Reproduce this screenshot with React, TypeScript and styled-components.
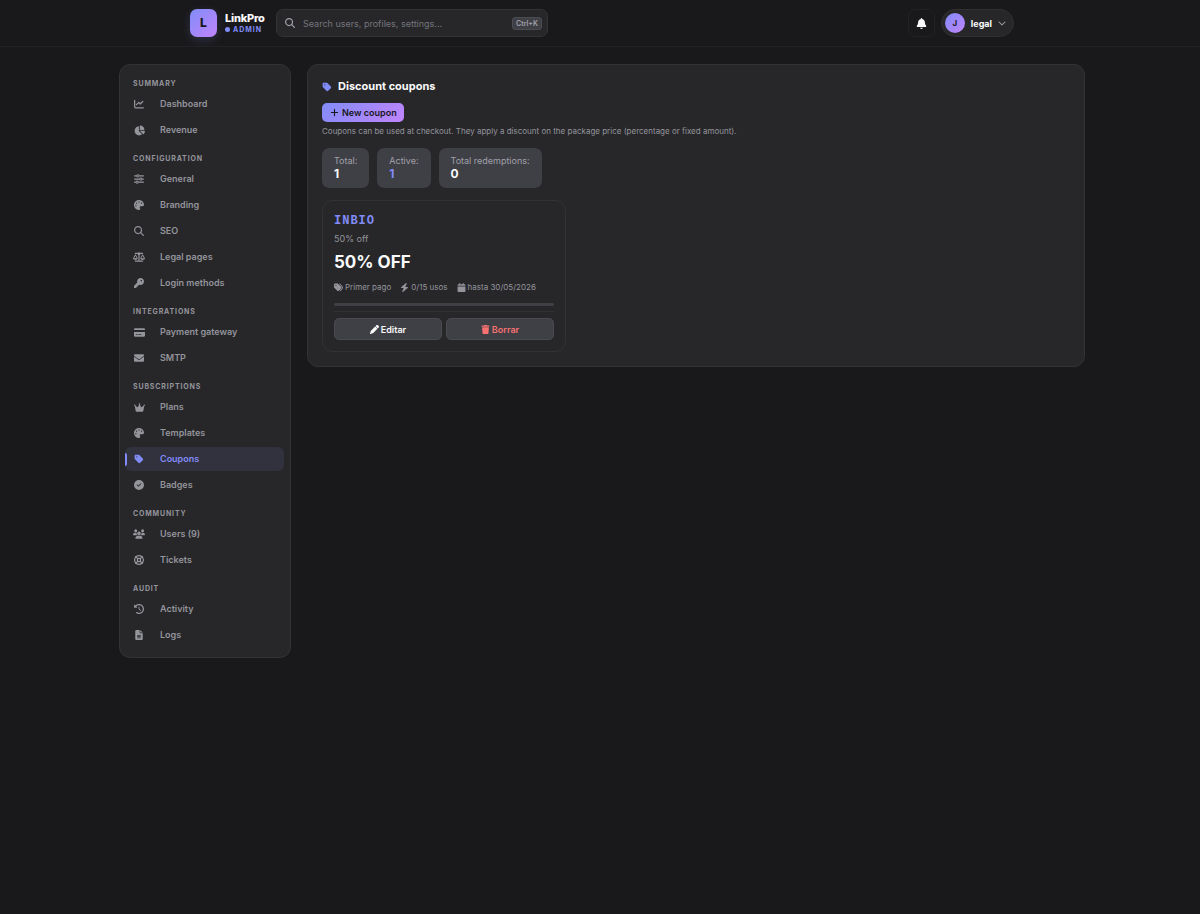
import React from "react";
import styled, { createGlobalStyle, css } from "styled-components";
import type { IconType } from "react-icons";
import {
  FaBell,
  FaBolt,
  FaCalendar,
  FaChartLine,
  FaChartPie,
  FaCircleCheck,
  FaClockRotateLeft,
  FaCreditCard,
  FaCrown,
  FaEnvelope,
  FaFileLines,
  FaKey,
  FaLifeRing,
  FaMagnifyingGlass,
  FaPalette,
  FaPen,
  FaPlus,
  FaScaleBalanced,
  FaSliders,
  FaTag,
  FaTags,
  FaTrash,
  FaUsers,
  FaChevronDown,
} from "react-icons/fa6";

const GlobalStyle = createGlobalStyle`
  *, *::before, *::after { box-sizing: border-box; }
  body {
    margin: 0;
    background: #19191b;
    color: #fafafa;
    font-family: Inter, "Liberation Sans", sans-serif;
    font-size: 9px;
    line-height: 12px;
  }
  button, input { font-family: inherit; margin: 0; }
  button { cursor: pointer; }
  svg { flex: none; }
`;

const gradient = "linear-gradient(135deg, #818cf8, #c084fc)";

const Header = styled.header`
  border-bottom: 1px solid #232326;
  padding: 9px 0 9px 4px;
`;

const HeaderInner = styled.div`
  display: flex;
  align-items: center;
  max-width: 824px;
  height: 28px;
  margin: 0 auto;
`;

const Brand = styled.a`
  display: flex;
  align-items: center;
  gap: 8px;
  width: 86px;
  color: inherit;
  text-decoration: none;
`;

const LogoMark = styled.span`
  display: grid;
  place-items: center;
  flex: none;
  width: 27px;
  height: 28px;
  border-radius: 7px;
  background: ${gradient};
  box-shadow: 0 3px 10px rgba(129, 140, 248, 0.2);
  color: #18181b;
  font-size: 12px;
  font-weight: 800;
`;

const BrandText = styled.span`
  display: flex;
  flex-direction: column;
`;

const BrandName = styled.span`
  font-size: 11px;
  font-weight: 800;
  line-height: 13px;
  letter-spacing: -0.02em;
`;

const BrandRole = styled.span`
  display: flex;
  align-items: center;
  gap: 3px;
  color: #818cf8;
  font-size: 7px;
  font-weight: 700;
  line-height: 9px;
  letter-spacing: 1px;

  &::before {
    content: "";
    width: 5px;
    height: 5px;
    border-radius: 50%;
    background: #818cf8;
  }
`;

const SearchBox = styled.label`
  display: flex;
  align-items: center;
  gap: 8px;
  flex: 0 1 272px;
  min-width: 0;
  height: 28px;
  padding: 0 5px 0 8px;
  border: 1px solid #333337;
  border-radius: 7px;
  background: #27272a;
  color: #a1a1aa;
`;

const SearchInput = styled.input`
  flex: 1;
  min-width: 0;
  padding: 0;
  border: 0;
  outline: 0;
  background: transparent;
  color: #fafafa;
  font-size: 9px;

  &::placeholder { color: #74747b; opacity: 1; }
`;

const Shortcut = styled.kbd`
  padding: 0 3px;
  border: 1px solid #4b4b52;
  border-radius: 3px;
  background: #3f3f46;
  color: #a1a1aa;
  font-family: inherit;
  font-size: 7px;
  font-weight: 600;
  line-height: 11px;
`;

const HeaderActions = styled.div`
  display: flex;
  gap: 6px;
  margin-left: auto;
`;

const BellButton = styled.button`
  display: grid;
  place-items: center;
  width: 27px;
  height: 28px;
  padding: 0;
  border: 1px solid #222225;
  border-radius: 7px;
  background: transparent;
  color: #fafafa;
`;

const AccountButton = styled.button`
  display: flex;
  align-items: center;
  gap: 6px;
  height: 28px;
  padding: 0 7px 0 3px;
  border: 1px solid #303033;
  border-radius: 14px;
  background: #27272a;
  color: #fafafa;
  font-size: 9px;
  font-weight: 700;

  svg { color: #a1a1aa; }
`;

const Avatar = styled.span`
  display: grid;
  place-items: center;
  width: 20px;
  height: 20px;
  border-radius: 50%;
  background: ${gradient};
  color: #18181b;
  font-size: 8px;
`;

const Layout = styled.div`
  padding: 17px 0 17px 4px;
`;

const LayoutInner = styled.div`
  display: grid;
  grid-template-columns: 172px minmax(0, 1fr);
  align-items: start;
  gap: 16px;
  max-width: 966px;
  margin: 0 auto;
`;

const panel = css`
  border: 1px solid #333336;
  border-radius: 11px;
  background: #27272a;
`;

const Sidebar = styled.nav`
  ${panel}
  display: flex;
  flex-direction: column;
  gap: 11px;
  padding: 13px 6px 10px 5px;
`;

const SectionTitle = styled.h2`
  margin: 0 0 2px;
  padding-left: 8px;
  color: #94949b;
  font-size: 7px;
  font-weight: 700;
  line-height: 12px;
  letter-spacing: 0.12em;
  text-transform: uppercase;
`;

const SectionList = styled.ul`
  display: flex;
  flex-direction: column;
  gap: 2px;
  margin: 0;
  padding: 0;
  list-style: none;
`;

const NavLink = styled.a<{ $active: boolean }>`
  display: flex;
  align-items: center;
  gap: 14px;
  height: 24px;
  padding-left: 7px;
  border-radius: 6px;
  color: #94949b;
  font-size: 9px;
  font-weight: 600;
  text-decoration: none;

  ${({ $active }) =>
    $active &&
    css`
      padding-left: 0;
      gap: 0;
      background: #32323f;
      color: #818cf8;

      &::before {
        content: "";
        width: 2px;
        height: 13px;
        margin-right: 5px;
        border-radius: 0 2px 2px 0;
        background: #818cf8;
      }

      & > span { margin-right: 14px; }
    `}
`;

const NavIcon = styled.span`
  display: grid;
  place-items: center;
  width: 14px;
`;

const Panel = styled.main`
  ${panel}
  padding: 14px;
`;

const PanelTitle = styled.h1`
  display: flex;
  align-items: center;
  gap: 6px;
  margin: 0 0 9px;
  font-size: 11px;
  font-weight: 700;
  line-height: 15px;

  svg { color: #818cf8; }
`;

const NewButton = styled.button`
  display: flex;
  align-items: center;
  gap: 3px;
  height: 19px;
  padding: 0 7px 0 8px;
  border: 0;
  border-radius: 5px;
  background: ${gradient};
  color: #18181b;
  font-size: 9px;
  font-weight: 600;
`;

const Description = styled.p`
  margin: 3px 0 11px;
  color: #94949b;
  font-size: 8px;
  line-height: 12px;
`;

const Stats = styled.dl`
  display: flex;
  gap: 8px;
  margin: 0 0 12px;
`;

const Stat = styled.div`
  padding: 7px 12px;
  border-radius: 7px;
  background: #3f3f46;
`;

const StatLabel = styled.dt`
  color: #a1a1aa;
  font-size: 9px;
  line-height: 12px;
`;

const StatValue = styled.dd<{ $accent?: boolean }>`
  margin: 0;
  color: ${({ $accent }) => ($accent ? "#818cf8" : "#fafafa")};
  font-size: 12px;
  font-weight: 700;
  line-height: 14px;
`;

const CouponGrid = styled.div`
  display: grid;
  grid-template-columns: repeat(auto-fill, minmax(240px, 1fr));
  gap: 8px;
`;

const CouponCard = styled.article`
  padding: 13px 11px 11px;
  border: 1px solid #323235;
  border-radius: 10px;
`;

const CouponCode = styled.h2`
  margin: 0;
  color: #818cf8;
  font-family: "Liberation Mono", monospace;
  font-size: 12px;
  font-weight: 700;
  line-height: 15px;
  letter-spacing: 1px;
`;

const CouponName = styled.p`
  margin: 4px 0 6px;
  color: #94949b;
  font-size: 9px;
  line-height: 12px;
`;

const CouponAmount = styled.p`
  margin: 0;
  font-size: 17px;
  font-weight: 700;
  line-height: 22px;
`;

const CouponMeta = styled.ul`
  display: flex;
  flex-wrap: wrap;
  gap: 9px;
  margin: 8px 0 10px;
  padding: 0;
  color: #94949b;
  font-size: 8px;
  line-height: 12px;
  list-style: none;
`;

const MetaItem = styled.li`
  display: flex;
  align-items: center;
  gap: 2px;
`;

const UsageTrack = styled.div`
  height: 3px;
  margin-bottom: 5px;
  border-radius: 2px;
  background: #3f3f46;
`;

const CouponActions = styled.div`
  display: grid;
  grid-template-columns: 1fr 1fr;
  gap: 4px;
  padding-top: 6px;
  border-top: 1px solid #323235;
`;

const ActionButton = styled.button<{ $danger?: boolean }>`
  display: flex;
  align-items: center;
  justify-content: center;
  gap: 2px;
  height: 22px;
  padding: 0;
  border: 1px solid #4a4a51;
  border-radius: 5px;
  background: #3f3f46;
  color: ${({ $danger }) => ($danger ? "#f87171" : "#fafafa")};
  font-size: 9px;
  font-weight: 600;
`;

type NavEntry = {
  label: string;
  icon: IconType;
  size?: number;
  active?: boolean;
};

const sections: { title: string; items: NavEntry[] }[] = [
  {
    title: "Summary",
    items: [
      { label: "Dashboard", icon: FaChartLine },
      { label: "Revenue", icon: FaChartPie, size: 11 },
    ],
  },
  {
    title: "Configuration",
    items: [
      { label: "General", icon: FaSliders },
      { label: "Branding", icon: FaPalette },
      { label: "SEO", icon: FaMagnifyingGlass },
      { label: "Legal pages", icon: FaScaleBalanced, size: 12 },
      { label: "Login methods", icon: FaKey },
    ],
  },
  {
    title: "Integrations",
    items: [
      { label: "Payment gateway", icon: FaCreditCard, size: 11 },
      { label: "SMTP", icon: FaEnvelope },
    ],
  },
  {
    title: "Subscriptions",
    items: [
      { label: "Plans", icon: FaCrown, size: 11 },
      { label: "Templates", icon: FaPalette },
      { label: "Coupons", icon: FaTag, active: true },
      { label: "Badges", icon: FaCircleCheck },
    ],
  },
  {
    title: "Community",
    items: [
      { label: "Users (9)", icon: FaUsers, size: 12 },
      { label: "Tickets", icon: FaLifeRing },
    ],
  },
  {
    title: "Audit",
    items: [
      { label: "Activity", icon: FaClockRotateLeft },
      { label: "Logs", icon: FaFileLines },
    ],
  },
];

export default function App() {
  return (
    <>
      <GlobalStyle />
      <Header>
        <HeaderInner>
          <Brand href="#">
            <LogoMark>L</LogoMark>
            <BrandText>
              <BrandName>LinkPro</BrandName>
              <BrandRole>ADMIN</BrandRole>
            </BrandText>
          </Brand>
          <SearchBox>
            <FaMagnifyingGlass size={10} />
            <SearchInput
              type="search"
              aria-label="Search"
              placeholder="Search users, profiles, settings..."
            />
            <Shortcut>Ctrl+K</Shortcut>
          </SearchBox>
          <HeaderActions>
            <BellButton aria-label="Notifications">
              <FaBell size={11} />
            </BellButton>
            <AccountButton>
              <Avatar>J</Avatar>
              legal
              <FaChevronDown size={8} />
            </AccountButton>
          </HeaderActions>
        </HeaderInner>
      </Header>

      <Layout>
        <LayoutInner>
          <Sidebar aria-label="Admin">
            {sections.map((section) => (
              <section key={section.title}>
                <SectionTitle>{section.title}</SectionTitle>
                <SectionList>
                  {section.items.map(({ label, icon: Icon, size = 10, active }) => (
                    <li key={label}>
                      <NavLink
                        href="#"
                        $active={!!active}
                        aria-current={active ? "page" : undefined}
                      >
                        <NavIcon>
                          <Icon size={size} />
                        </NavIcon>
                        {label}
                      </NavLink>
                    </li>
                  ))}
                </SectionList>
              </section>
            ))}
          </Sidebar>

          <Panel>
            <PanelTitle>
              <FaTag size={10} />
              Discount coupons
            </PanelTitle>
            <NewButton>
              <FaPlus size={9} />
              New coupon
            </NewButton>
            <Description>
              Coupons can be used at checkout. They apply a discount on the
              package price (percentage or fixed amount).
            </Description>
            <Stats>
              <Stat>
                <StatLabel>Total:</StatLabel>
                <StatValue>1</StatValue>
              </Stat>
              <Stat>
                <StatLabel>Active:</StatLabel>
                <StatValue $accent>1</StatValue>
              </Stat>
              <Stat>
                <StatLabel>Total redemptions:</StatLabel>
                <StatValue>0</StatValue>
              </Stat>
            </Stats>
            <CouponGrid>
              <CouponCard>
                <CouponCode>INBIO</CouponCode>
                <CouponName>50% off</CouponName>
                <CouponAmount>50% OFF</CouponAmount>
                <CouponMeta>
                  <MetaItem>
                    <FaTags size={9} />
                    Primer pago
                  </MetaItem>
                  <MetaItem>
                    <FaBolt size={9} />
                    0/15 usos
                  </MetaItem>
                  <MetaItem>
                    <FaCalendar size={9} />
                    hasta 30/05/2026
                  </MetaItem>
                </CouponMeta>
                <UsageTrack />
                <CouponActions>
                  <ActionButton>
                    <FaPen size={9} />
                    Editar
                  </ActionButton>
                  <ActionButton $danger>
                    <FaTrash size={9} />
                    Borrar
                  </ActionButton>
                </CouponActions>
              </CouponCard>
            </CouponGrid>
          </Panel>
        </LayoutInner>
      </Layout>
    </>
  );
}
